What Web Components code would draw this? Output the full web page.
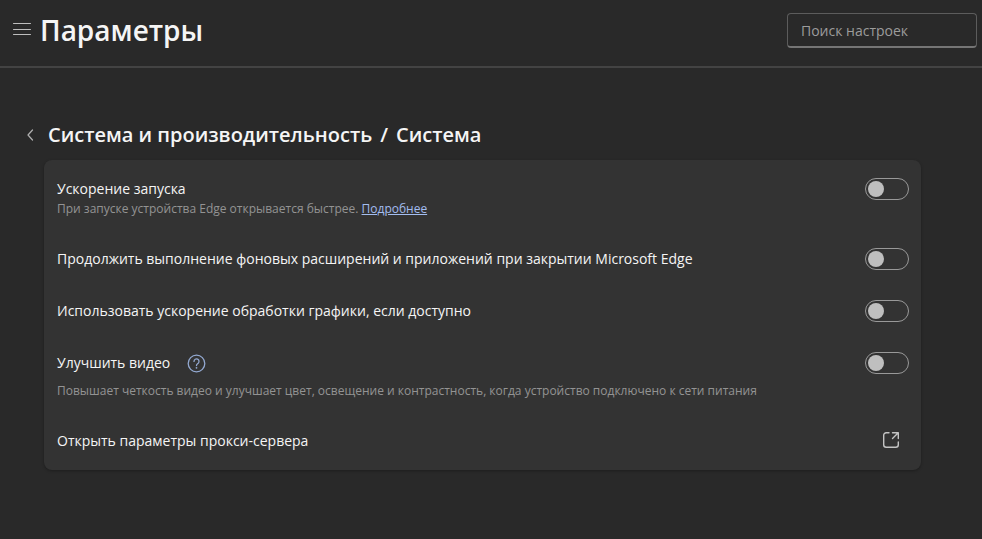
<!DOCTYPE html>
<html lang="ru">
<head>
<meta charset="utf-8">
<meta name="viewport" content="width=device-width, initial-scale=1">
<title>Параметры</title>
<style>
body {
    margin: 0;
    min-height: 100vh;
    background: #292929;
    color: #f5f5f5;
    font-family: "Open Sans", "Noto Sans", sans-serif;
    font-size: 14px;
    --card: #333333;
    --muted: #939393;
    --link: #a3bdf0;
    --stroke: #999999;
}
</style>
</head>
<body>
<settings-header heading="Параметры" placeholder="Поиск настроек"></settings-header>
<main>
    <settings-page section="Система и производительность" heading="Система">
        <settings-row label="Ускорение запуска">
            <span slot="description">При запуске устройства Edge открывается быстрее. <text-link href="#more">Подробнее</text-link></span>
            <toggle-switch slot="control" label="Ускорение запуска"></toggle-switch>
        </settings-row>
        <settings-row label="Продолжить выполнение фоновых расширений и приложений при закрытии Microsoft Edge">
            <toggle-switch slot="control" label="Продолжить выполнение фоновых расширений и приложений при закрытии Microsoft Edge"></toggle-switch>
        </settings-row>
        <settings-row label="Использовать ускорение обработки графики, если доступно">
            <toggle-switch slot="control" label="Использовать ускорение обработки графики, если доступно"></toggle-switch>
        </settings-row>
        <settings-row class="spaced" label="Улучшить видео">
            <help-button slot="hint"></help-button>
            <span slot="description">Повышает четкость видео и улучшает цвет, освещение и контрастность, когда устройство подключено к сети питания</span>
            <toggle-switch slot="control" label="Улучшить видео"></toggle-switch>
        </settings-row>
        <settings-row label="Открыть параметры прокси-сервера">
            <open-button slot="control" label="Открыть параметры прокси-сервера"></open-button>
        </settings-row>
    </settings-page>
</main>

<script>
// Shared base: renders the markup of the subclass into an open shadow root
class SettingsElement extends HTMLElement {
    connectedCallback(){
        if(this.shadowRoot){
            return;
        }
        const template = document.createElement("template");
        template.innerHTML = this.render();
        this.attachShadow({ mode: "open" });
        this.shadowRoot.appendChild(template.content.cloneNode(true));
    }

    attr(name){
        return this.getAttribute(name) || "";
    }
}

// Top bar with the menu button, the title and the search box
class SettingsHeader extends SettingsElement {
    render(){
        return `
<style>
:host {
    display: flex;
    align-items: center;
    justify-content: space-between;
    padding: 10px 5px 16px 12px;
    border-bottom: 2px solid #434343;
}

.title {
    display: flex;
    align-items: center;
    gap: 8px;
}

button {
    display: flex;
    padding: 0;
    border: 0;
    background: none;
    color: #bdbdbd;
}

h1 {
    margin: 0;
    font-size: 28px;
    font-weight: 600;
    line-height: 40px;
}

input {
    box-sizing: border-box;
    width: 190px;
    height: 35px;
    padding: 1px 13px 0;
    border: 1px solid #5c5c5c;
    border-bottom: 2px solid #757575;
    border-radius: 4px;
    background: transparent;
    color: inherit;
    font: inherit;
}

input::placeholder {
    color: #9c9c9c;
    opacity: 1;
}
</style>
<div class="title">
    <button type="button" aria-label="Меню">
        <svg width="20" height="20" viewBox="0 0 20 20" fill="none" stroke="currentColor" stroke-linecap="round"><path d="M1.500 3.500h17M1.500 9.500h17M1.500 14.500h17"/></svg>
    </button>
    <h1>${this.attr("heading")}</h1>
</div>
<input type="search" placeholder="${this.attr("placeholder")}" aria-label="${this.attr("placeholder")}">
`;
    }
}

// Breadcrumb heading above a card of rows
class SettingsPage extends SettingsElement {
    render(){
        return `
<style>
:host {
    display: block;
    padding: 53px 61px 24px 24px;
}

nav {
    display: flex;
    align-items: center;
    gap: 12px;
}

button {
    display: flex;
    padding: 0;
    border: 0;
    background: none;
    color: #b0b0b0;
}

h2 {
    display: flex;
    gap: 8px;
    margin: 0;
    font-size: 20px;
    font-weight: 600;
    line-height: 28px;
}

.card {
    display: flex;
    flex-direction: column;
    gap: 30px;
    margin: 11px 0 0 20px;
    padding: 18px 12px 18px 13px;
    border-radius: 8px;
    background: var(--card);
    box-shadow: 0 1px 3px rgba(0, 0, 0, 0.3);
}
</style>
<nav>
    <button type="button" aria-label="Назад">
        <svg width="12" height="14" viewBox="0 0 12 14" fill="none" stroke="currentColor" stroke-width="1.2" stroke-linecap="round" stroke-linejoin="round"><path d="M8.500 2 4 7l4.500 5"/></svg>
    </button>
    <h2><span>${this.attr("section")}</span><span>/</span><span>${this.attr("heading")}</span></h2>
</nav>
<div class="card"><slot></slot></div>
`;
    }
}

class SettingsRow extends SettingsElement {
    render(){
        return `
<style>
:host {
    display: flex;
    align-items: flex-start;
    justify-content: space-between;
    gap: 16px;
}

.text {
    display: flex;
    flex-direction: column;
}

:host(.spaced) .text {
    gap: 8px;
}

.label {
    display: flex;
    align-items: center;
    gap: 16px;
    line-height: 22px;
}

::slotted([slot="description"]) {
    color: var(--muted);
    font-size: 12px;
    line-height: 18px;
}
</style>
<div class="text">
    <div class="label"><span>${this.attr("label")}</span><slot name="hint"></slot></div>
    <slot name="description"></slot>
</div>
<slot name="control"></slot>
`;
    }
}

class ToggleSwitch extends SettingsElement {
    render(){
        return `
<style>
:host {
    display: flex;
}

input {
    appearance: none;
    box-sizing: border-box;
    display: flex;
    align-items: center;
    width: 44px;
    height: 22px;
    margin: 0;
    padding: 0 2px;
    border: 1px solid var(--stroke);
    border-radius: 11px;
}

input::before {
    content: "";
    width: 16px;
    height: 16px;
    border-radius: 50%;
    background: #bfbfbf;
}

input:checked {
    justify-content: flex-end;
}
</style>
<input type="checkbox" role="switch" aria-label="${this.attr("label")}">
`;
    }
}

class TextLink extends SettingsElement {
    render(){
        return `
<style>
:host {
    display: inline;
}

a {
    color: var(--link);
}
</style>
<a href="${this.attr("href")}"><slot></slot></a>
`;
    }
}

class HelpButton extends SettingsElement {
    render(){
        return `
<style>
:host {
    display: flex;
}

button {
    display: flex;
    padding: 0;
    border: 0;
    background: none;
    color: #93a9d1;
}
</style>
<button type="button" aria-label="Справка">
    <svg width="20" height="20" viewBox="0 0 20 20" fill="none" stroke="currentColor" stroke-width="1.300" stroke-linecap="round"><circle cx="10.500" cy="10.500" r="8.300"/><path d="M8 8.400a2.500 2.500 0 1 1 4 2c-.9.700-1.500 1.100-1.500 2.100"/><circle cx="10.500" cy="14.800" r=".9" fill="currentColor" stroke="none"/></svg>
</button>
`;
    }
}

// Row action that opens a window outside of the page
class OpenButton extends SettingsElement {
    render(){
        return `
<style>
:host {
    display: flex;
}

button {
    display: flex;
    padding: 0 8px;
    border: 0;
    background: none;
    color: #c4c4c4;
}
</style>
<button type="button" aria-label="${this.attr("label")}">
    <svg width="20" height="20" viewBox="0 0 20 20" fill="none" stroke="currentColor" stroke-width="1.400" stroke-linecap="round" stroke-linejoin="round"><path d="M8 2.700H5.200a2.500 2.500 0 0 0-2.500 2.500v9.600a2.500 2.500 0 0 0 2.500 2.500h9.600a2.500 2.500 0 0 0 2.500-2.500V12M11.500 2.700h5.800v5.800M17 3l-5.500 5.500"/></svg>
</button>
`;
    }
}

window.customElements.define("settings-header", SettingsHeader);
window.customElements.define("settings-page", SettingsPage);
window.customElements.define("settings-row", SettingsRow);
window.customElements.define("toggle-switch", ToggleSwitch);
window.customElements.define("text-link", TextLink);
window.customElements.define("help-button", HelpButton);
window.customElements.define("open-button", OpenButton);
</script>
</body>
</html>
